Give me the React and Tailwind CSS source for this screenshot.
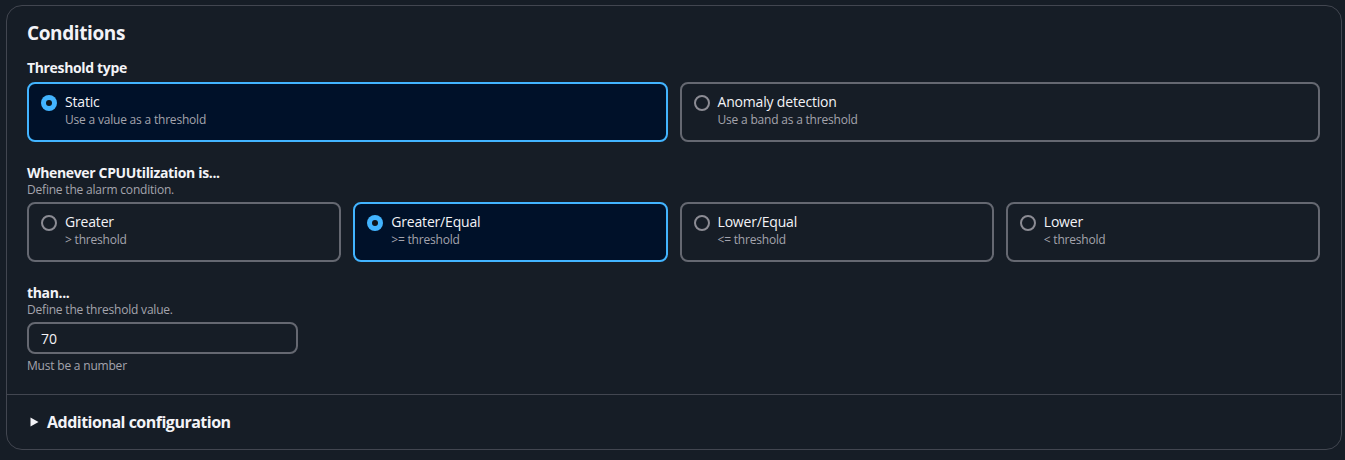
import React from "react";

function Radio({ checked }) {
  return checked ? (
    <span className="mt-[3px] flex h-4 w-4 shrink-0 items-center justify-center rounded-full bg-[#42b4ff]">
      <span className="h-[6px] w-[6px] rounded-full bg-[#0f141a]" />
    </span>
  ) : (
    <span className="mt-[3px] h-4 w-4 shrink-0 rounded-full border-2 border-[#8c8c94]" />
  );
}

function Tile({ label, desc, checked }) {
  return (
    <div
      className={
        "flex h-[60px] items-start gap-[8px] rounded-[8px] border-2 px-[12px] pt-[8px] " +
        (checked ? "border-[#42b4ff] bg-[#001129]" : "border-[#656871] bg-[#161d26]")
      }
    >
      <Radio checked={checked} />
      <div className="flex flex-col">
        <span className="text-[14px] leading-[20px] tracking-[-0.18px] text-[#f3f3f7]">{label}</span>
        <span className="text-[12px] leading-[16px] tracking-[-0.2px] text-[#a4a4ad]">{desc}</span>
      </div>
    </div>
  );
}

export default function App() {
  return (
    <div
      className="h-[460px] w-[1345px] bg-[#161d26] pl-[6px] pt-[5px]"
      style={{ fontFamily: '"Open Sans", "Noto Sans", sans-serif' }}
    >
      <div className="h-[445px] w-[1336px] rounded-[16px] border border-[#424650] bg-[#161d26]">
        <div className="px-[20px] pt-[15px]">
          <h2 className="text-[19px] font-bold leading-[24px] tracking-[-0.4px] text-[#f3f3f7]">Conditions</h2>
          <div className="mt-[14px] text-[14px] font-bold leading-[18px] tracking-[-0.35px] text-[#f3f3f7]">Threshold type</div>
          <div className="mt-[5px] grid grid-cols-2 gap-[12px] pr-[1px]">
            <Tile checked label="Static" desc="Use a value as a threshold" />
            <Tile label="Anomaly detection" desc="Use a band as a threshold" />
          </div>
          <div className="mt-[22px] text-[14px] font-bold leading-[18px] tracking-[-0.35px] text-[#f3f3f7]">Whenever CPUUtilization is...</div>
          <div className="text-[12px] leading-[16px] tracking-[-0.2px] text-[#a4a4ad]">Define the alarm condition.</div>
          <div className="mt-[4px] grid grid-cols-4 gap-[12px] pr-[1px]">
            <Tile label="Greater" desc="> threshold" />
            <Tile checked label="Greater/Equal" desc=">= threshold" />
            <Tile label="Lower/Equal" desc="<= threshold" />
            <Tile label="Lower" desc="< threshold" />
          </div>
          <div className="mt-[22px] text-[14px] font-bold leading-[18px] tracking-[-0.35px] text-[#f3f3f7]">than...</div>
          <div className="text-[12px] leading-[16px] tracking-[-0.2px] text-[#a4a4ad]">Define the threshold value.</div>
          <div className="mt-[4px] flex h-[32px] w-[271px] items-center rounded-[8px] border-2 border-[#656871] px-[12px] text-[14px] text-[#f3f3f7]">
            70
          </div>
          <div className="mt-[4px] text-[12px] leading-[16px] tracking-[-0.2px] text-[#a4a4ad]">Must be a number</div>
        </div>
        <div className="mt-[20px] border-t border-[#424650]" />
        <div className="flex items-center gap-[8px] px-[23px] pt-[16px]">
          <svg width="9" height="10" viewBox="0 0 9 10">
            <path d="M0.5 0.5 L8.5 5 L0.5 9.5 Z" fill="#f3f3f7" />
          </svg>
          <span className="text-[16px] font-bold leading-[22px] tracking-[-0.5px] text-[#f3f3f7]">Additional configuration</span>
        </div>
      </div>
    </div>
  );
}
